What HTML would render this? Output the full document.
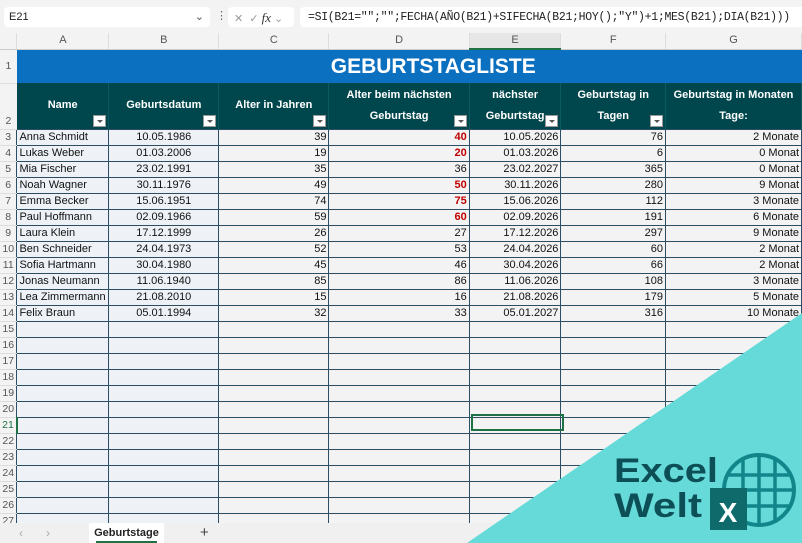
<!DOCTYPE html>
<html><head><meta charset="utf-8"><style>
*{margin:0;padding:0;box-sizing:border-box}
body{width:802px;height:543px;overflow:hidden;background:#f3f3f3;font-family:"Liberation Sans",sans-serif;position:relative}
.top{position:absolute;left:0;top:0;width:802px;height:32px;background:#f3f3f3}
.nb{position:absolute;left:4px;top:7px;width:206px;height:20px;background:#fff;border-radius:4px;font-size:11px;padding:4px 5px;color:#222}
.fx{position:absolute;left:228px;top:7px;width:66px;height:20px;background:#fff;border-radius:4px;font-size:11px;color:#999;padding:3px 6px}
.fb{position:absolute;left:300px;top:7px;width:502px;height:20px;background:#fff;border-radius:4px 0 0 4px;font-family:"Liberation Mono",monospace;font-size:11.5px;padding:4px 8px;color:#222;white-space:nowrap;letter-spacing:-0.3px}
table{position:absolute;left:0;top:33px;border-collapse:collapse;table-layout:fixed;font-size:11px}
td{overflow:hidden;white-space:nowrap;padding:0 2px;height:16px;line-height:15px;color:#111}
.ch td{height:15px;background:#f3f3f3;color:#555;text-align:center;border-right:1px solid #ddd;border-bottom:1px solid #ccc}
.ch td.sel{border-bottom:2px solid #1e7145;background:#e6e6e6}
td.rh{background:#f3f3f3;color:#555;text-align:center;padding:0;font-size:10.5px;border-bottom:1px solid #ddd}
td.rh.sel{color:#1e7145;border-right:2px solid #1e7145}
.d td:not(.rh){border:1px solid #2b4d66}
.d td.a,.d td.b{background:#eef2f7}
.b{text-align:center}.r{text-align:right}
.red{color:#c00000;font-weight:bold}
.t1 td.t{background:#0c70c1;color:#fff;font-weight:bold;font-size:21px;text-align:center;height:34px;padding-left:50px}
.t2 td.h{background:#00474d;color:#fff;font-weight:bold;text-align:center;height:46px;vertical-align:middle;position:relative;white-space:normal;line-height:21px;font-size:11px;border-right:1px solid #0a5a60}
.dd{position:absolute;right:2px;bottom:2px;width:13px;height:12px;background:#fff;border:1px solid #999}
.dd:after{content:"";position:absolute;left:3px;top:4px;border:3px solid transparent;border-top:3px solid #555}
.tabs{position:absolute;left:0;top:523px;width:802px;height:20px;background:#f0f0f0}
.tab{position:absolute;left:89px;top:0;width:75px;height:20px;background:#fff;font-size:11px;font-weight:bold;color:#222;text-align:center;padding-top:4px}
.tab:after{content:"";position:absolute;left:7px;right:7px;bottom:0;height:2px;background:#1e7145}
.cur{position:absolute;left:471px;top:414px;width:93px;height:17px;border:2px solid #1e7145}
</style></head><body>
<div class="top">
<div class="nb">E21<span style="position:absolute;right:6px;top:3px;color:#555">⌄</span></div>
<div style="position:absolute;left:216px;top:9px;color:#666;font-size:11px">⋮</div>
<div class="fx">✕ &nbsp;✓ <i style="font-family:'Liberation Serif',serif;color:#333;font-size:13px">fx</i> ⌄</div>
<div class="fb">=SI(B21="";"";FECHA(AÑO(B21)+SIFECHA(B21;HOY();"Y")+1;MES(B21);DIA(B21)))</div>
</div>
<table>
<colgroup><col style="width:17px"><col style="width:92px"><col style="width:110px"><col style="width:111px"><col style="width:141px"><col style="width:92px"><col style="width:105px"><col style="width:136px"></colgroup>
<tr class="ch"><td></td><td>A</td><td>B</td><td>C</td><td>D</td><td class="sel">E</td><td>F</td><td>G</td></tr>
<tr class="t1"><td class="rh">1</td><td class="t" colspan="7">GEBURTSTAGLISTE</td></tr>
<tr class="t2"><td class="rh" style="vertical-align:bottom">2</td><td class="h">Name<span class="dd"></span></td><td class="h">Geburtsdatum<span class="dd"></span></td><td class="h">Alter in Jahren<span class="dd"></span></td><td class="h">Alter beim nächsten Geburtstag<span class="dd"></span></td><td class="h">nächster Geburtstag<span class="dd"></span></td><td class="h">Geburtstag in Tagen<span class="dd"></span></td><td class="h" style="white-space:nowrap">Geburtstag in Monaten<br>Tage:</td></tr>
<tr class="d"><td class="rh">3</td><td class="a">Anna Schmidt</td><td class="b">10.05.1986</td><td class="r">39</td><td class="r red">40</td><td class="r">10.05.2026</td><td class="r">76</td><td class="r">2 Monate</td></tr>
<tr class="d"><td class="rh">4</td><td class="a">Lukas Weber</td><td class="b">01.03.2006</td><td class="r">19</td><td class="r red">20</td><td class="r">01.03.2026</td><td class="r">6</td><td class="r">0 Monat</td></tr>
<tr class="d"><td class="rh">5</td><td class="a">Mia Fischer</td><td class="b">23.02.1991</td><td class="r">35</td><td class="r">36</td><td class="r">23.02.2027</td><td class="r">365</td><td class="r">0 Monat</td></tr>
<tr class="d"><td class="rh">6</td><td class="a">Noah Wagner</td><td class="b">30.11.1976</td><td class="r">49</td><td class="r red">50</td><td class="r">30.11.2026</td><td class="r">280</td><td class="r">9 Monat</td></tr>
<tr class="d"><td class="rh">7</td><td class="a">Emma Becker</td><td class="b">15.06.1951</td><td class="r">74</td><td class="r red">75</td><td class="r">15.06.2026</td><td class="r">112</td><td class="r">3 Monate</td></tr>
<tr class="d"><td class="rh">8</td><td class="a">Paul Hoffmann</td><td class="b">02.09.1966</td><td class="r">59</td><td class="r red">60</td><td class="r">02.09.2026</td><td class="r">191</td><td class="r">6 Monate</td></tr>
<tr class="d"><td class="rh">9</td><td class="a">Laura Klein</td><td class="b">17.12.1999</td><td class="r">26</td><td class="r">27</td><td class="r">17.12.2026</td><td class="r">297</td><td class="r">9 Monate</td></tr>
<tr class="d"><td class="rh">10</td><td class="a">Ben Schneider</td><td class="b">24.04.1973</td><td class="r">52</td><td class="r">53</td><td class="r">24.04.2026</td><td class="r">60</td><td class="r">2 Monat</td></tr>
<tr class="d"><td class="rh">11</td><td class="a">Sofia Hartmann</td><td class="b">30.04.1980</td><td class="r">45</td><td class="r">46</td><td class="r">30.04.2026</td><td class="r">66</td><td class="r">2 Monat</td></tr>
<tr class="d"><td class="rh">12</td><td class="a">Jonas Neumann</td><td class="b">11.06.1940</td><td class="r">85</td><td class="r">86</td><td class="r">11.06.2026</td><td class="r">108</td><td class="r">3 Monate</td></tr>
<tr class="d"><td class="rh">13</td><td class="a">Lea Zimmermann</td><td class="b">21.08.2010</td><td class="r">15</td><td class="r">16</td><td class="r">21.08.2026</td><td class="r">179</td><td class="r">5 Monate</td></tr>
<tr class="d"><td class="rh">14</td><td class="a">Felix Braun</td><td class="b">05.01.1994</td><td class="r">32</td><td class="r">33</td><td class="r">05.01.2027</td><td class="r">316</td><td class="r">10 Monate</td></tr>
<tr class="d"><td class="rh">15</td><td class="a"></td><td class="b"></td><td></td><td></td><td></td><td></td><td></td></tr>
<tr class="d"><td class="rh">16</td><td class="a"></td><td class="b"></td><td></td><td></td><td></td><td></td><td></td></tr>
<tr class="d"><td class="rh">17</td><td class="a"></td><td class="b"></td><td></td><td></td><td></td><td></td><td></td></tr>
<tr class="d"><td class="rh">18</td><td class="a"></td><td class="b"></td><td></td><td></td><td></td><td></td><td></td></tr>
<tr class="d"><td class="rh">19</td><td class="a"></td><td class="b"></td><td></td><td></td><td></td><td></td><td></td></tr>
<tr class="d"><td class="rh">20</td><td class="a"></td><td class="b"></td><td></td><td></td><td></td><td></td><td></td></tr>
<tr class="d"><td class="rh sel">21</td><td class="a"></td><td class="b"></td><td></td><td></td><td></td><td></td><td></td></tr>
<tr class="d"><td class="rh">22</td><td class="a"></td><td class="b"></td><td></td><td></td><td></td><td></td><td></td></tr>
<tr class="d"><td class="rh">23</td><td class="a"></td><td class="b"></td><td></td><td></td><td></td><td></td><td></td></tr>
<tr class="d"><td class="rh">24</td><td class="a"></td><td class="b"></td><td></td><td></td><td></td><td></td><td></td></tr>
<tr class="d"><td class="rh">25</td><td class="a"></td><td class="b"></td><td></td><td></td><td></td><td></td><td></td></tr>
<tr class="d"><td class="rh">26</td><td class="a"></td><td class="b"></td><td></td><td></td><td></td><td></td><td></td></tr>
<tr class="d"><td class="rh">27</td><td class="a"></td><td class="b"></td><td></td><td></td><td></td><td></td><td></td></tr>
</table>
<div class="cur"></div>
<div class="tabs">
<span style="position:absolute;left:19px;top:3px;color:#aaa;font-size:12px">‹</span>
<span style="position:absolute;left:46px;top:3px;color:#aaa;font-size:12px">›</span>
<div class="tab">Geburtstage</div>
<span style="position:absolute;left:200px;top:1px;color:#444;font-size:15px">+</span>
</div>
<svg style="position:absolute;left:0;top:0" width="802" height="543">
<polygon points="802,313 802,543 467,543" fill="#66d9d9"/>
<circle cx="759" cy="490" r="35" fill="none" stroke="#11868a" stroke-width="4"/>
<g stroke="#11868a" stroke-width="3.5">
<line x1="743" y1="458" x2="743" y2="523"/><line x1="759" y1="455" x2="759" y2="525"/><line x1="775" y1="458" x2="775" y2="523"/>
<line x1="728" y1="475" x2="790" y2="475"/><line x1="725" y1="490" x2="793" y2="490"/><line x1="728" y1="506" x2="790" y2="506"/>
</g>
<rect x="710" y="488" width="37" height="42" fill="#0f6b6b"/>
<text x="728" y="522" font-family="Liberation Sans" font-weight="bold" font-size="28" fill="#fff" text-anchor="middle">X</text>
<text x="614" y="482" font-family="Liberation Sans" font-weight="bold" font-size="34" fill="#0d4f57" textLength="104" lengthAdjust="spacingAndGlyphs">Excel</text>
<text x="614" y="517" font-family="Liberation Sans" font-weight="bold" font-size="34" fill="#0d4f57" textLength="88" lengthAdjust="spacingAndGlyphs">Welt</text>
</svg>
</body></html>
